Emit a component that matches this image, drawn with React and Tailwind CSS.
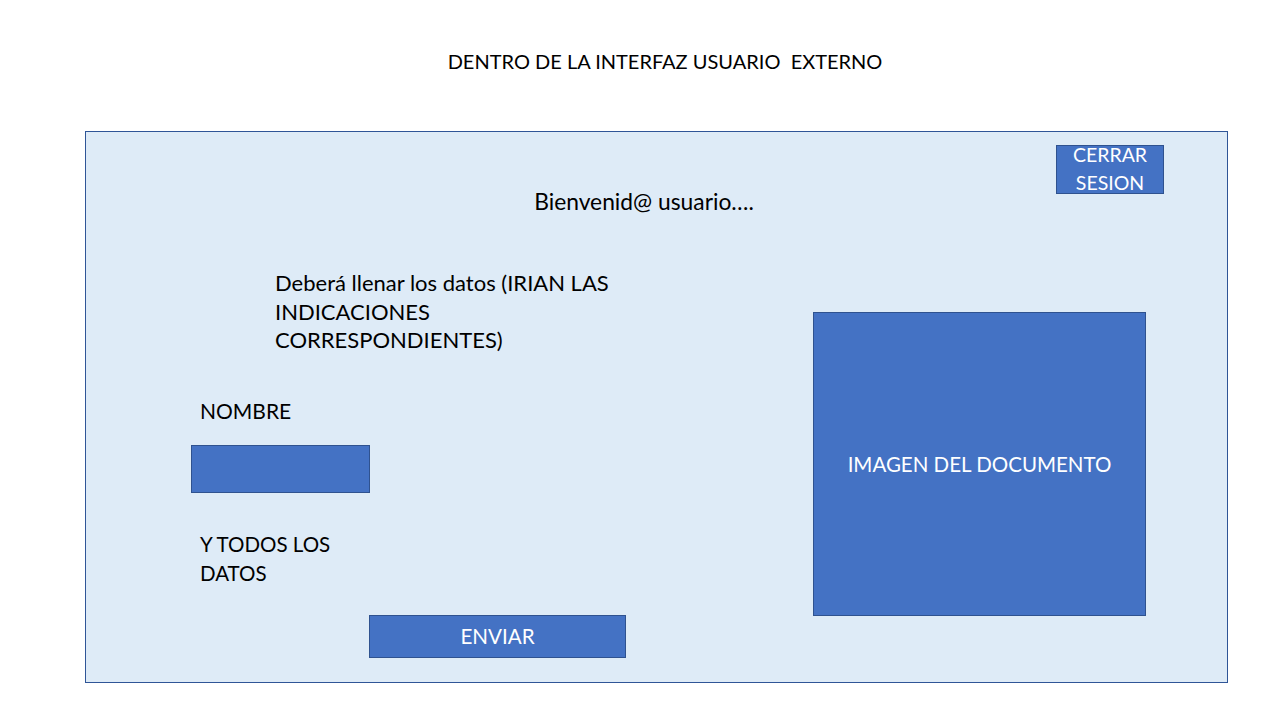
export default function App() {
  const font = { fontFamily: 'Lato, "Open Sans", sans-serif' };
  return (
    <div className="w-[1280px] h-[720px] bg-white text-black overflow-hidden" style={font}>
      <div className="pt-[47px] pl-[50px] text-center text-[20px] leading-[28px] whitespace-pre">
        DENTRO DE LA INTERFAZ USUARIO  EXTERNO
      </div>
      <div className="ml-[85px] mt-[56px] w-[1143px] h-[552px] border border-[#2F5597] bg-[#DEEBF7] flex flex-col">
        <div className="flex items-start h-[62px]">
          <div className="flex-1 pl-[146px] pt-[55px] text-center text-[22.8px] leading-[28px]">
            Bienvenid@ usuario….
          </div>
          <div className="mt-[13px] mr-[63px] w-[108px] h-[49px] bg-[#4472C4] border border-[#2F528F] flex flex-col items-center justify-center text-white text-[19.5px] leading-[28px]">
            <span className="-mt-[2px]">CERRAR</span>
            <span>SESION</span>
          </div>
        </div>
        <div className="flex flex-1">
          <div className="flex-1 flex flex-col items-start">
            <div className="mt-[75px] ml-[189px] text-[22px] leading-[28.5px]">
              Deberá llenar los datos (IRIAN LAS
              <br />
              INDICACIONES
              <br />
              CORRESPONDIENTES)
            </div>
            <div className="mt-[42px] ml-[114px] text-[21px] leading-[28.5px]">NOMBRE</div>
            <div className="mt-[20px] ml-[105px] w-[179px] h-[48px] bg-[#4472C4] border border-[#2F528F]" />
            <div className="mt-[37px] ml-[114px] text-[20.5px] leading-[29px]">
              Y TODOS LOS
              <br />
              DATOS
            </div>
            <div className="mt-[27px] ml-[283px] w-[257px] h-[43px] bg-[#4472C4] border border-[#2F528F] flex items-center justify-center text-white text-[20.6px]">
              ENVIAR
            </div>
          </div>
          <div className="mt-[118px] mr-[81px] w-[333px] h-[304px] bg-[#4472C4] border border-[#2F528F] flex items-center justify-center text-white text-[20.5px]">
            IMAGEN DEL DOCUMENTO
          </div>
        </div>
      </div>
    </div>
  );
}
